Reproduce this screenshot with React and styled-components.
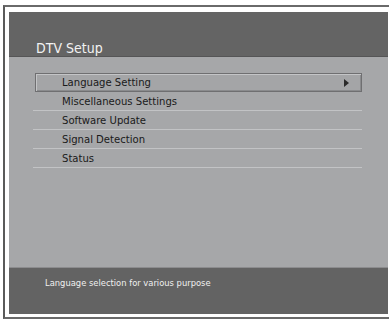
import React from "react";
import styled, { createGlobalStyle } from "styled-components";

const Global = createGlobalStyle`
  html, body { margin: 0; padding: 0; background: #ffffff; }
  body { font-family: "DejaVu Sans Condensed", "DejaVu Sans", sans-serif; }
`;

const Frame = styled.div`
  margin: 5px 0 0 3px;
  width: 386px;
  box-sizing: border-box;
  border-left: 2px solid #5a5a5a;
  border-top: 2px solid #6a6a6a;
  border-bottom: 2px solid #6a6a6a;
  padding: 5px 0 3px 4px;
`;

const Panel = styled.div`
  width: 379px;
  display: flex;
  flex-direction: column;
`;

const Header = styled.div`
  height: 45px;
  background: #646464;
  border-bottom: 1px solid #555556;
  display: flex;
  align-items: flex-end;
  padding: 0 0 0 27px;
  box-sizing: border-box;
`;

const Title = styled.h1`
  margin: 0;
  font-weight: normal;
  font-size: 14px;
  color: #f2f2f2;
  line-height: 16px;
`;

const Body = styled.div`
  height: 210px;
  background: #a6a7a9;
  padding: 16px 0 0 24px;
  box-sizing: border-box;
`;

const Menu = styled.ul`
  list-style: none;
  margin: 0;
  padding: 0;
  width: 329px;
`;

const Item = styled.li`
  height: 19px;
  box-sizing: border-box;
  display: flex;
  align-items: center;
  justify-content: space-between;
  padding: 0 12px 0 29px;
  font-size: 11.2px;
  color: #1a1a1a;
  border-bottom: 1px solid #c2c3c5;
  ${(p) =>
    p.$selected &&
    `
    margin-left: 2px;
    padding-left: 26px;
    border: 1px solid #6f6f71;
    box-shadow: inset 1px 1px 0 #c4c5c7, inset -1px -1px 0 #8a8b8d;
    background: #a4a5a7;
  `}
`;

const Arrow = styled.span`
  width: 0;
  height: 0;
  border-top: 4px solid transparent;
  border-bottom: 4px solid transparent;
  border-left: 5px solid #2a2a2a;
`;

const Footer = styled.div`
  height: 47px;
  background: #636363;
  border-top: 1px solid #8c8c8e;
  box-sizing: border-box;
  padding: 9px 0 0 36px;
`;

const Hint = styled.p`
  margin: 0;
  font-size: 9.3px;
  color: #f0f0f0;
  line-height: 12px;
`;

const items = [
  "Language Setting",
  "Miscellaneous Settings",
  "Software Update",
  "Signal Detection",
  "Status",
];

export default function App() {
  return (
    <>
      <Global />
      <Frame>
        <Panel>
          <Header>
            <Title>DTV Setup</Title>
          </Header>
          <Body>
            <Menu>
              {items.map((t, i) => (
                <Item key={t} $selected={i === 0}>
                  <span>{t}</span>
                  {i === 0 && <Arrow />}
                </Item>
              ))}
            </Menu>
          </Body>
          <Footer>
            <Hint>Language selection for various purpose</Hint>
          </Footer>
        </Panel>
      </Frame>
    </>
  );
}
